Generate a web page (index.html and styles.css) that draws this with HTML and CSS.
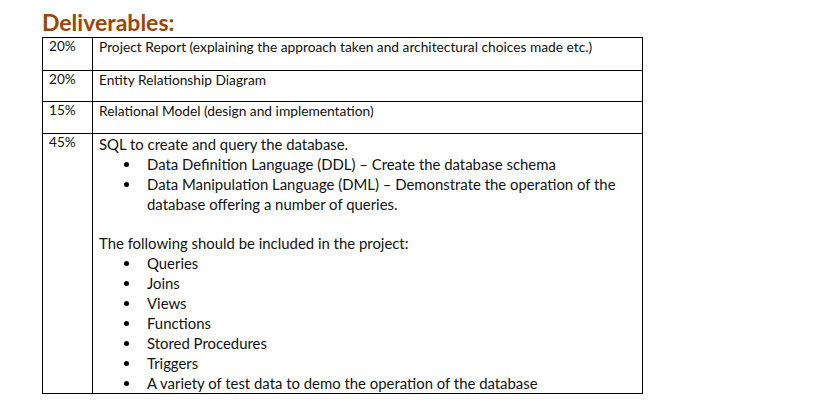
FILE: index.html
```html
<!DOCTYPE html>
<html>
<head>
<meta charset="utf-8">
<link rel="stylesheet" href="styles.css">
</head>
<body>
<div class="page">
  <h1 class="title">Deliverables:</h1>
  <table class="deliv">
    <tr class="r1">
      <td class="pct">20%</td>
      <td class="desc">Project Report (explaining the approach taken and architectural choices made etc.)</td>
    </tr>
    <tr class="r2">
      <td class="pct">20%</td>
      <td class="desc">Entity Relationship Diagram</td>
    </tr>
    <tr class="r3">
      <td class="pct">15%</td>
      <td class="desc">Relational Model (design and implementation)</td>
    </tr>
    <tr class="r4">
      <td class="pct">45%</td>
      <td class="desc big">
        <p class="line">SQL to create and query the database.</p>
        <ul class="bul">
          <li>Data Definition Language (DDL) – Create the database schema</li>
          <li>Data Manipulation Language (DML) – Demonstrate the operation of the database offering a number of queries.</li>
        </ul>
        <p class="line gap">The following should be included in the project:</p>
        <ul class="bul">
          <li>Queries</li>
          <li>Joins</li>
          <li>Views</li>
          <li>Functions</li>
          <li>Stored Procedures</li>
          <li>Triggers</li>
          <li>A variety of test data to demo the operation of the database</li>
        </ul>
      </td>
    </tr>
  </table>
</div>
</body>
</html>
```
FILE: styles.css
```css
html, body {
  margin: 0;
  padding: 0;
  background: #ffffff;
}
.page {
  padding: 8px 0 0 42px;
  font-family: "Lato", "Liberation Sans", sans-serif;
  color: #111111;
}
.title {
  margin: 0;
  font-size: 23px;
  line-height: 29px;
  font-weight: bold;
  color: #974806;
}
.deliv {
  border-collapse: collapse;
  width: 601px;
  table-layout: fixed;
}
.deliv td {
  border: 1px solid #000000;
  vertical-align: top;
  padding: 0;
}
.deliv td.pct {
  width: 43px;
  font-size: 13.6px;
  line-height: 15px;
  padding: 1px 0 0 6px;
}
.deliv td.desc {
  font-size: 13.75px;
  line-height: 15px;
  padding: 1px 0 0 6px;
}
.r1 { height: 33px; }
.r2 { height: 31px; }
.r3 { height: 32px; }
.r4 { height: 260px; }
.deliv td.big {
  font-size: 14.9px;
  line-height: 20px;
  padding-top: 0;
  padding-bottom: 0;
}
.line {
  margin: 0;
}
.gap {
  margin-top: 19px;
}
.bul {
  margin: 0;
  padding: 0 0 0 48px;
  list-style: none;
}
.bul li {
  position: relative;
}
.bul li::before {
  content: "";
  position: absolute;
  left: -23px;
  top: 8px;
  width: 5px;
  height: 5px;
  border-radius: 50%;
  background: #000;
}
```
